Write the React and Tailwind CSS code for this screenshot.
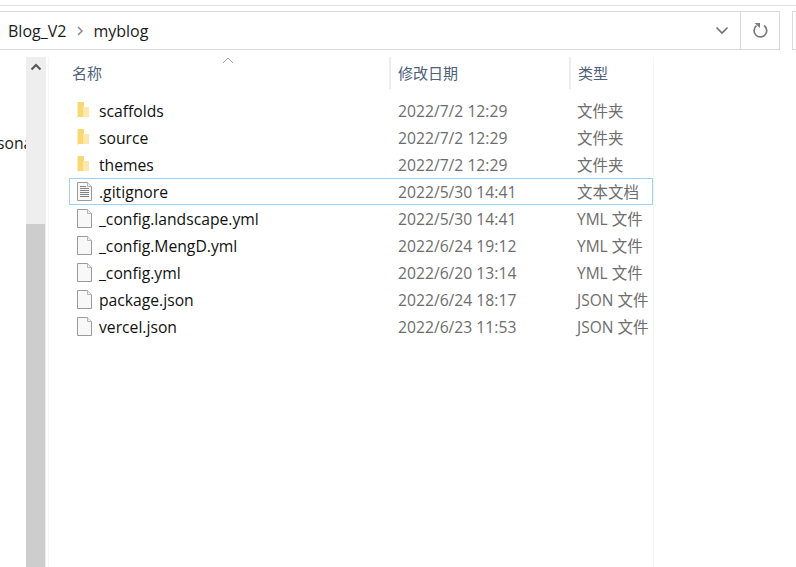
import React from 'react';

const font = { fontFamily: '"Open Sans", "Noto Sans CJK SC", sans-serif' };

const files = [
    { name: 'scaffolds', date: '2022/7/2 12:29', type: '文件夹', icon: 'folder' },
    { name: 'source', date: '2022/7/2 12:29', type: '文件夹', icon: 'folder' },
    { name: 'themes', date: '2022/7/2 12:29', type: '文件夹', icon: 'folder' },
    { name: '.gitignore', date: '2022/5/30 14:41', type: '文本文档', icon: 'text', selected: true },
    { name: '_config.landscape.yml', date: '2022/5/30 14:41', type: 'YML 文件', icon: 'file' },
    { name: '_config.MengD.yml', date: '2022/6/24 19:12', type: 'YML 文件', icon: 'file' },
    { name: '_config.yml', date: '2022/6/20 13:14', type: 'YML 文件', icon: 'file' },
    { name: 'package.json', date: '2022/6/24 18:17', type: 'JSON 文件', icon: 'file' },
    { name: 'vercel.json', date: '2022/6/23 11:53', type: 'JSON 文件', icon: 'file' },
];

const FolderIcon = () => (
    <svg width="13" height="17" viewBox="0 0 13 17" className="ml-[7px]">
        <path d="M0 0h7v15H1.500L0 16.500z" fill="#f8d775" />
        <path d="M6 5h6v10H6z" fill="#fde7ab" />
        <path d="M0 0h1v16H0z" fill="#fdeebd" />
    </svg>
);

const FileIcon = ({ lines }) => (
    <svg width="16" height="19" viewBox="0 0 16 19" className="ml-[7px]">
        <path d="M.500.500h10l4 4v14H.500z" fill="#f8f8f8" stroke="#9a9a9a" />
        <path d="M10.500.500v4h4" fill="#efefef" stroke="#b5b5b5" />
        {lines && (
            <path d="M3 4.500h6M3 6.500h9M3 8.500h9M3 10.500h9M3 12.500h9M3 14.500h9" stroke="#808080" />
        )}
    </svg>
);

const FileRow = ({ file }) => (
    <div
        className={`flex items-center h-[27px] ml-[20px] w-[584px] text-[15.7px] ${
            file.selected ? 'border border-[#99d1ff]' : 'border border-transparent'
        }`}
    >
        <div className="w-[29px] flex items-center shrink-0">
            {file.icon === 'folder' ? <FolderIcon /> : <FileIcon lines={file.icon === 'text'} />}
        </div>
        <div className="w-[299px] mt-[2px] text-[#111] shrink-0 whitespace-nowrap">{file.name}</div>
        <div className="w-[179px] mt-[2px] text-[#6d6d6d] shrink-0 whitespace-nowrap">{file.date}</div>
        <div className="mt-[2px] text-[#6d6d6d] whitespace-nowrap text-[15.5px]">{file.type}</div>
    </div>
);

const App = () => {
    return (
        <div className="relative w-[796px] h-[567px] overflow-hidden bg-white flex flex-col" style={font}>
            <div className="h-[6px] shrink-0 border-b border-[#e3e3e3]"></div>
            <div className="flex mt-[5px] h-[39px] shrink-0">
                <div className="flex items-center w-[780px] shrink-0 border border-l-0 border-[#d9d9d9] pl-[8px] text-[16px] text-[#1a1a1a]">
                    <span>Blog_V2</span>
                    <svg width="8" height="10" viewBox="0 0 8 10" className="ml-[10px] mr-[9px]">
                        <path d="M2 1l4 4-4 4" fill="none" stroke="#8a8a8a" strokeWidth="1.500" />
                    </svg>
                    <span>myblog</span>
                    <svg width="14" height="9" viewBox="0 0 14 9" className="ml-auto mr-[11px]">
                        <path d="M1.500 1.500L7 7l5.500-5.500" fill="none" stroke="#707070" strokeWidth="1.600" />
                    </svg>
                    <div className="flex items-center justify-center w-[39px] h-full border-l border-[#d9d9d9]">
                        <svg width="16" height="17" viewBox="0 0 16 17">
                            <path d="M4.500 3.700A6.300 6.300 0 1 0 12 3.500" fill="none" stroke="#7a7a7a" strokeWidth="1.700" />
                            <path d="M2.500 1h5.500v5z" fill="#7a7a7a" />
                        </svg>
                    </div>
                </div>
                <div className="ml-[12px] w-[4px] border border-r-0 border-[#d9d9d9]"></div>
            </div>
            <div className="flex flex-1 min-h-0 mt-[7px]">
                <div className="w-[26px] shrink-0 overflow-hidden relative">
                    <span className="absolute left-[-3px] top-[75px] text-[15.7px] text-[#222]">sona</span>
                </div>
                <div className="w-[20px] shrink-0 bg-[#eeeeee] flex flex-col">
                    <div className="h-[167px] flex justify-center pt-[6px] shrink-0">
                        <svg width="12" height="8" viewBox="0 0 12 8">
                            <path d="M1.500 6.500L6 2l4.500 4.500" fill="none" stroke="#555" strokeWidth="2" />
                        </svg>
                    </div>
                    <div className="flex-1 bg-[#cdcdcd] mr-px"></div>
                </div>
                <div className="w-[606px] ml-[2px] border-l border-r border-[#f5f5f5] relative shrink-0">
                    <svg width="12" height="7" viewBox="0 0 12 7" className="absolute left-[173px] top-0">
                        <path d="M1 6l5-5 5 5" fill="none" stroke="#a0a0a0" />
                    </svg>
                    <div className="flex h-[32px] text-[15px] text-[#4c607a]">
                        <div className="w-[342px] pl-[23px] pt-[1px] flex items-center border-r-2 border-[#ececec] shrink-0">名称</div>
                        <div className="w-[180px] pl-[7px] pt-[1px] flex items-center border-r-2 border-[#ececec] shrink-0">修改日期</div>
                        <div className="pl-[7px] pt-[1px] flex items-center">类型</div>
                    </div>
                    <div className="pt-[8px]">
                        {files.map((file) => (
                            <FileRow key={file.name} file={file} />
                        ))}
                    </div>
                </div>
            </div>
        </div>
    );
};

export default App;
